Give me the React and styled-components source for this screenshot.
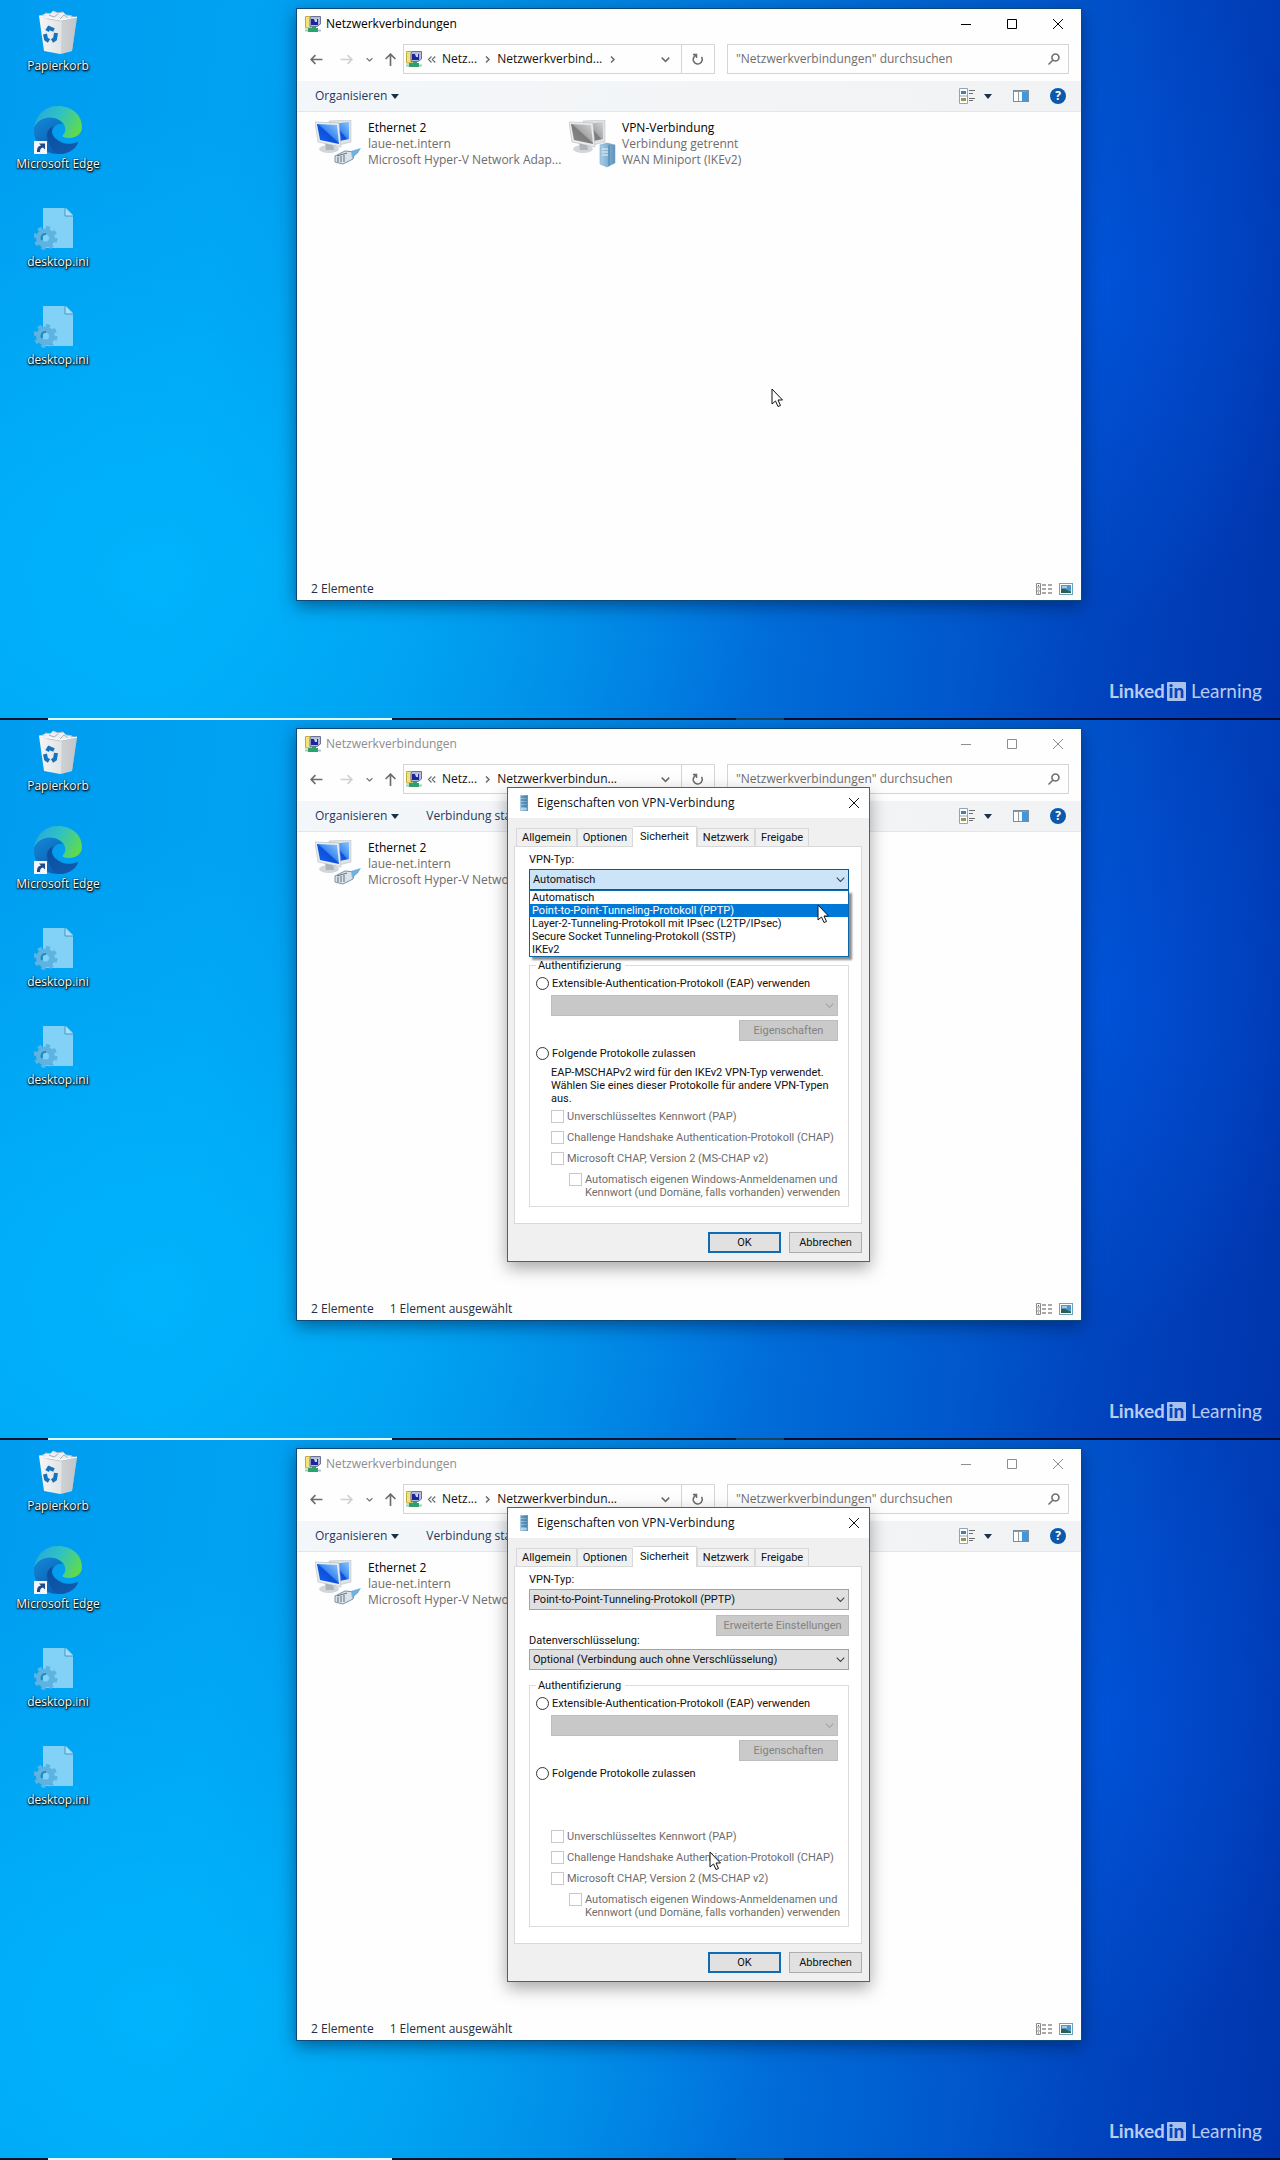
import React from "react";
import styled, { createGlobalStyle } from "styled-components";

const frames = [
  { id: "start", address: "Netzwerkverbind...", cursor: { x: 771, y: 388 } },
  {
    id: "typ",
    address: "Netzwerkverbindun...",
    selected: true,
    vpnType: "Automatisch",
    open: true,
    cursor: { x: 817, y: 184 },
  },
  {
    id: "pptp",
    address: "Netzwerkverbindun...",
    selected: true,
    vpnType: "Point-to-Point-Tunneling-Protokoll (PPTP)",
    cursor: { x: 709, y: 411 },
  },
];

const vpnTypes = [
  "Automatisch",
  "Point-to-Point-Tunneling-Protokoll (PPTP)",
  "Layer-2-Tunneling-Protokoll mit IPsec (L2TP/IPsec)",
  "Secure Socket Tunneling-Protokoll (SSTP)",
  "IKEv2",
];

const tabs = ["Allgemein", "Optionen", "Sicherheit", "Netzwerk", "Freigabe"];

/* ---------- icons ---------- */

const Gradients = () => (
  <HiddenSvg aria-hidden="true">
    <defs>
      <linearGradient id="edgeTop" x1="0" y1="0.3" x2="1" y2="0.7">
        <stop offset="0" stopColor="#27a9dc" />
        <stop offset="0.45" stopColor="#2fc2c4" />
        <stop offset="1" stopColor="#62dc45" />
      </linearGradient>
      <linearGradient id="edgeMid" x1="0" y1="0" x2="0.6" y2="1">
        <stop offset="0" stopColor="#1388d6" />
        <stop offset="1" stopColor="#0c5cb4" />
      </linearGradient>
      <linearGradient id="edgeLow" x1="0" y1="0" x2="1" y2="1">
        <stop offset="0" stopColor="#0b4f9e" />
        <stop offset="1" stopColor="#0f5cb0" />
      </linearGradient>
      <linearGradient id="bin" x1="0" y1="0" x2="1" y2="0">
        <stop offset="0" stopColor="#f4f5f6" />
        <stop offset="0.65" stopColor="#dfe2e4" />
        <stop offset="1" stopColor="#b9bfc4" />
      </linearGradient>
      <linearGradient id="screenBlue" x1="0" y1="1" x2="1" y2="0">
        <stop offset="0" stopColor="#1668ee" />
        <stop offset="0.5" stopColor="#0c50dc" />
        <stop offset="0.55" stopColor="#3f8cf0" />
        <stop offset="1" stopColor="#8cc6ff" />
      </linearGradient>
      <linearGradient id="screenGrey" x1="0" y1="1" x2="1" y2="0">
        <stop offset="0" stopColor="#8a8a8a" />
        <stop offset="0.5" stopColor="#7c7c7c" />
        <stop offset="0.55" stopColor="#a8a8a8" />
        <stop offset="1" stopColor="#d4d4d4" />
      </linearGradient>
      <linearGradient id="tower" x1="0" y1="0" x2="1" y2="0">
        <stop offset="0" stopColor="#a9cfe8" />
        <stop offset="1" stopColor="#5d93bd" />
      </linearGradient>
    </defs>
  </HiddenSvg>
);

const BinIcon = () => (
  <svg width="48" height="48" viewBox="0 0 48 48">
    <path d="M5 8 L14 5 L43 9 L38 43 L26 46 L10 43 Z" fill="url(#bin)" />
    <path d="M28 11 L43 9 L38 43 L27 46 Z" fill="#c3c8cc" opacity="0.7" />
    <path
      d="M8 8 L12 5 L16 6 L19 3 L24 5 L29 4 L32 7 L38 8 L36 11 L28 13 L15 11 Z"
      fill="#eceff0"
      stroke="#bcc3c8"
    />
    <path d="M15 7 L20 9 L24 6 M26 11 L30 7 L34 10" fill="none" stroke="#a9b0b5" />
    <path d="M5 8 L27 12 L43 9" fill="none" stroke="#fff" />
    <g fill="none" stroke="#1573bd" strokeWidth="4">
      <path d="M13 23 L15 20 L20 22" />
      <path d="M11 26 L12 31 L15 33" />
      <path d="M22 25 L21 31 L18 33" />
    </g>
  </svg>
);

const EdgeIcon = () => (
  <svg width="48" height="48" viewBox="0 0 48 48">
    <path
      d="M0 24 C0 15 7 11 15 11 C22 11 28 14 31 19 C26 16 19 19 18 27 C17 36 24 46 33 45.6 C30 47 27 48 24 48 C10 48 0 37 0 24Z"
      fill="url(#edgeMid)"
    />
    <path
      d="M19 20 C14 23 13 27 13 29 C13 40 21 48 28 48 C36 47 42 42 44 37 C44 36 43 36 42 36.5 C36 39 27 38 21 32 C18 29 17 24 19 20Z"
      fill="url(#edgeLow)"
    />
    <path
      d="M0 22 C2 8 12 0 24 0 C38 0 48 9 48 21 C48 28 42 32 35 32 C30 32 28 31 29 29 C33 25 32 18 25 14 C16 9 4 12 0 22Z"
      fill="url(#edgeTop)"
    />
    <rect x="0" y="35" width="13" height="13" fill="#f4f6f8" />
    <path
      d="M3 46 C3 42 4 40 7 39.500 L5 37.500 H11 V43.500 L9 41.500 C7 42 6 43 6 46 Z"
      fill="#20488c"
    />
  </svg>
);

const IniIcon = () => (
  <svg width="48" height="48" viewBox="0 0 48 48">
    <path d="M9 4 H32 L39 11 V44 H9 Z" fill="#82d2f8" />
    <path d="M31 4 V12 H39" fill="#a8e0fb" stroke="#4b96c0" />
    <circle cx="11.500" cy="34" r="6.500" fill="none" stroke="#5eb3e0" strokeWidth="6" />
    <circle
      cx="11.500"
      cy="34"
      r="10"
      fill="none"
      stroke="#5eb3e0"
      strokeWidth="4"
      strokeDasharray="4 3.850"
    />
    <path d="M8 36 A4 4 0 0 1 12 30" fill="none" stroke="#2b86ba" strokeWidth="2" />
  </svg>
);

const NetworkIcon = () => (
  <svg width="16" height="16" viewBox="0 0 16 16">
    <path d="M0.500 0.500 H6 V12 H0.500 Z" fill="#f2e27c" stroke="#c2ab45" />
    <path d="M6 0.500 H15.500 V8 L12 10.500 H5 V2 Z" fill="#b4bcd6" stroke="#6a7296" />
    <path d="M6 3 H13 V9 H6 Z" fill="#1c259c" />
    <path d="M9 3 H12 V6 H10 Z" fill="#c7d3f5" />
    <path d="M7 10.500 H11 V12 H13 V16 H3 V12 H7 Z" fill="#2fa06c" />
    <path d="M0 14.500 H3 M13 14.500 H16" stroke="#a5c9c0" strokeWidth="2" />
  </svg>
);

const Screens = ({ fill }) => (
  <>
    <path d="M14 1 L36 0 V22 L20 26 Z" fill="#dfe3e6" stroke="#b3b8bc" strokeWidth="0.500" />
    <path d="M17 4 L34 2 V19 L20 22 Z" fill={fill} />
    <ellipse cx="14" cy="29" rx="10" ry="4" fill="#d2d6d9" />
    <path d="M10 22 L18 24 L19 30 H11 Z" fill="#aeb4b9" />
    <path d="M0 2 L24 3 L26 27 L3 22 Z" fill="#e9ecee" stroke="#abb1b6" strokeWidth="0.500" />
    <path d="M2 4 L22 5 L24 24 L5 20 Z" fill={fill} />
  </>
);

const EthernetIcon = () => (
  <svg width="48" height="48" viewBox="0 0 48 48">
    <Screens fill="url(#screenBlue)" />
    <path d="M20 36 L30 31 L40 32 L38 39 L28 44 L20 42 Z" fill="#dbe4ea" stroke="#7f92a1" />
    <path d="M23 37 V42 M26 36 V42 M29 35 V42 M22 36 L32 33" stroke="#5d6f7e" fill="none" />
    <path d="M36 31 L46 28 L43 33 L37 38 Z" fill="#6fb0dc" />
  </svg>
);

const VpnIcon = () => (
  <svg width="48" height="48" viewBox="0 0 48 48">
    <Screens fill="url(#screenGrey)" />
    <path d="M31 25 L38 23 L46 25 V43 L38 47 L31 44 Z" fill="url(#tower)" stroke="#6f9cbd" strokeWidth="0.500" />
    <path d="M33 29 H39 M33 32 H39 M33 35 H39" stroke="#eaf5fc" />
    <path d="M40 25 V46" stroke="#4d80a8" />
  </svg>
);

const ServerIcon = () => (
  <svg width="8" height="16" viewBox="0 0 8 16">
    <rect width="8" height="16" fill="url(#tower)" />
    <path d="M1 2 H7 M1 5 H7 M1 8 H7 M1 11 H7" stroke="#2e6b98" />
    <path d="M1 14 H7" stroke="#d9edf9" />
  </svg>
);

const LineIcon = ({ d, size = 12, width = 1 }) => (
  <svg width={size} height={size} viewBox="0 0 12 12">
    <path d={d} fill="none" stroke="currentColor" strokeWidth={width} />
  </svg>
);

const Caret = () => (
  <svg width="8" height="5" viewBox="0 0 8 5">
    <path d="M0 0 H8 L4 5 Z" fill="#1d2f45" />
  </svg>
);

const ViewIcon = () => (
  <svg width="16" height="16" viewBox="0 0 16 16">
    <path d="M0.500 0.500 H8.500 V15.500 H0.500 Z M0.500 8 H8.500" fill="#fff" stroke="#8fa5b3" />
    <rect x="2" y="3" width="5" height="3" fill="#3b82b8" />
    <rect x="2" y="10" width="5" height="3" fill="#9c9055" />
    <path d="M10 2.500 H16 M10 5.500 H14 M10 10.500 H16 M10 12.500 H14" stroke="#6d6d6d" />
  </svg>
);

const PreviewIcon = () => (
  <svg width="16" height="12" viewBox="0 0 16 12">
    <rect x="0.500" y="0.500" width="15" height="11" fill="#fff" stroke="#7b8d9b" />
    <path d="M1 1.500 H15 M5.500 2 V11" stroke="#8a9aa6" />
    <rect x="9" y="2" width="6" height="9" fill="#3f97dd" />
  </svg>
);

const DetailsIcon = () => (
  <svg width="16" height="12" viewBox="0 0 16 12">
    <path d="M0.500 0.500 H4.500 V11.500 H0.500 Z M0.500 4 H4.500 M0.500 8 H4.500" fill="none" stroke="#8a8a8a" />
    <path d="M2 2.500 H3 M2 6 H3 M2 10 H3 M6 2 H10 M12 2 H16 M6 6 H10 M12 6 H16 M6 10 H10 M12 10 H16" stroke="#555" />
  </svg>
);

const LargeIcon = () => (
  <svg width="14" height="12" viewBox="0 0 14 12">
    <rect x="0.500" y="0.500" width="13" height="11" fill="#fff" stroke="#6fa3c4" />
    <rect x="2" y="2" width="10" height="8" fill="#4f93cf" />
    <path d="M2 10 V6 L6 6 L12 9 V10 Z" fill="#2d5f4a" />
    <path d="M3 4 H8" stroke="#fff" />
  </svg>
);

const CursorIcon = () => (
  <svg width="13" height="20" viewBox="0 0 13 20">
    <path
      d="M1 1 V16 L4.500 13 L7 18.500 L9.500 17.500 L7 12 H11.500 Z"
      fill="#fff"
      stroke="#111"
    />
  </svg>
);

const closePath = "M1 1 L11 11 M11 1 L1 11";
const downPath = "M1 3.500 L6 8.500 L11 3.500";
const rightPath = "M4 2 L8 6 L4 10";

/* ---------- parts ---------- */

const DesktopIcons = () => (
  <IconColumn>
    <DesktopIcon>
      <BinIcon />
      Papierkorb
    </DesktopIcon>
    <DesktopIcon>
      <EdgeIcon />
      Microsoft Edge
    </DesktopIcon>
    <DesktopIcon>
      <IniIcon />
      desktop.ini
    </DesktopIcon>
    <DesktopIcon>
      <IniIcon />
      desktop.ini
    </DesktopIcon>
  </IconColumn>
);

const ExplorerWindow = ({ frame, children }) => (
  <Explorer>
    <TitleBar $inactive={frame.selected}>
      <NetworkIcon />
      <Title>Netzwerkverbindungen</Title>
      <CaptionButton aria-label="Minimieren">
        <LineIcon d="M1 6.500 H11" />
      </CaptionButton>
      <CaptionButton aria-label="Maximieren">
        <LineIcon d="M1.500 1.500 H10.500 V10.500 H1.500 Z" />
      </CaptionButton>
      <CaptionButton aria-label="Schließen">
        <LineIcon d={closePath} />
      </CaptionButton>
    </TitleBar>
    <NavBar>
      <NavButton aria-label="Zurück">
        <LineIcon d="M11.500 6 H1 M5 2 L1 6 L5 10" width={1.5} size={13} />
      </NavButton>
      <NavButton aria-label="Vorwärts" $faded>
        <LineIcon d="M0.500 6 H11 M7 2 L11 6 L7 10" width={1.5} size={13} />
      </NavButton>
      <NavButton aria-label="Zuletzt besucht" $width={16}>
        <LineIcon d={downPath} width={2} size={7} />
      </NavButton>
      <NavButton aria-label="Nach oben" $width={26}>
        <LineIcon d="M6 12 V1 M1.500 5.500 L6 1 L10.500 5.500" width={1.5} size={13} />
      </NavButton>
      <AddressBar>
        <NetworkIcon />
        <Chevrons>
          <LineIcon d="M6 2 L2 6 L6 10 M11 2 L7 6 L11 10" width={1.5} size={9} />
        </Chevrons>
        <Crumb>Netz...</Crumb>
        <LineIcon d={rightPath} width={2} size={9} />
        <Crumb>{frame.address}</Crumb>
        {!frame.selected && <LineIcon d={rightPath} width={2} size={9} />}
        <AddressEnd>
          <NavButton aria-label="Vorherige Orte" $width={32}>
            <LineIcon d={downPath} width={2} size={9} />
          </NavButton>
          <RefreshButton aria-label="Aktualisieren">
            <LineIcon d="M9.500 4 A4.500 4.500 0 1 1 4 2.300 M1 1.500 H4.500 V5" width={1.5} />
          </RefreshButton>
        </AddressEnd>
      </AddressBar>
      <SearchBox>
        <SearchInput
          aria-label="Suchen"
          placeholder={'"Netzwerkverbindungen" durchsuchen'}
        />
        <LineIcon d="M4.500 7.500 L0.500 11.500 M7.500 1 A3.500 3.500 0 1 1 7.400 1 Z" width={1.5} />
      </SearchBox>
    </NavBar>
    <Toolbar>
      <ToolButton>
        Organisieren <Caret />
      </ToolButton>
      {frame.selected && <ToolButton>Verbindung starten</ToolButton>}
      <ToolRight>
        <ViewIcon />
        <Caret />
        <PreviewIcon />
        <HelpButton aria-label="Hilfe">?</HelpButton>
      </ToolRight>
    </Toolbar>
    <Content>
      <Connection>
        <EthernetIcon />
        <ConnectionText>
          <ConnectionName>Ethernet 2</ConnectionName>
          laue-net.intern
          <br />
          Microsoft Hyper-V Network Adap...
        </ConnectionText>
      </Connection>
      {!frame.selected && (
        <Connection>
          <VpnIcon />
          <ConnectionText>
            <ConnectionName>VPN-Verbindung</ConnectionName>
            Verbindung getrennt
            <br />
            WAN Miniport (IKEv2)
          </ConnectionText>
        </Connection>
      )}
    </Content>
    <StatusBar>
      <span>2 Elemente</span>
      {frame.selected && <span>1 Element ausgewählt</span>}
      <StatusIcons>
        <DetailsIcon />
        <LargeIcon />
      </StatusIcons>
    </StatusBar>
    {children}
  </Explorer>
);

const Dropdown = ({ id, label, value, active, disabled }) => (
  <SelectWrap>
    <Select
      id={id}
      aria-label={label}
      defaultValue={value}
      disabled={disabled}
      $active={active}
    >
      <option value={value}>{value}</option>
    </Select>
    <SelectArrow $faded={disabled}>
      <LineIcon d={downPath} size={9} width={1.5} />
    </SelectArrow>
  </SelectWrap>
);

const PropertiesDialog = ({ frame }) => (
  <Dialog>
    <DialogTitle>
      <ServerIcon />
      <Title>Eigenschaften von VPN-Verbindung</Title>
      <CaptionButton aria-label="Schließen" $width={30}>
        <LineIcon d={closePath} />
      </CaptionButton>
    </DialogTitle>
    <Tabs>
      {tabs.map((tab) => (
        <Tab key={tab} $active={tab === "Sicherheit"}>
          {tab}
        </Tab>
      ))}
    </Tabs>
    <Pane>
      <FieldLabel htmlFor={`${frame.id}-typ`}>VPN-Typ:</FieldLabel>
      <Dropdown id={`${frame.id}-typ`} value={frame.vpnType} active={frame.open} />
      {frame.open && (
        <OptionList>
          {vpnTypes.map((type, i) => (
            <OptionItem key={type} $hover={i === 1}>
              {type}
            </OptionItem>
          ))}
        </OptionList>
      )}
      <Encryption>
        {!frame.open && (
          <>
            <AdvancedButton disabled>Erweiterte Einstellungen</AdvancedButton>
            <FieldLabel htmlFor={`${frame.id}-enc`}>Datenverschlüsselung:</FieldLabel>
            <Dropdown
              id={`${frame.id}-enc`}
              value="Optional (Verbindung auch ohne Verschlüsselung)"
            />
          </>
        )}
      </Encryption>
      <Group>
        <Legend>Authentifizierung</Legend>
        <Choice>
          <Radio type="radio" name={`${frame.id}-auth`} />
          Extensible-Authentication-Protokoll (EAP) verwenden
        </Choice>
        <Indented>
          <Dropdown id={`${frame.id}-eap`} label="EAP-Typ" value="" disabled />
          <PropsButton disabled>Eigenschaften</PropsButton>
        </Indented>
        <Choice>
          <Radio type="radio" name={`${frame.id}-auth`} />
          Folgende Protokolle zulassen
        </Choice>
        <Hint>
          {frame.open && (
            <>
              EAP-MSCHAPv2 wird für den IKEv2 VPN-Typ verwendet.
              <br />
              Wählen Sie eines dieser Protokolle für andere VPN-Typen
              <br />
              aus.
            </>
          )}
        </Hint>
        <Protocols>
          <Protocol>
            <Check type="checkbox" disabled />
            Unverschlüsseltes Kennwort (PAP)
          </Protocol>
          <Protocol>
            <Check type="checkbox" disabled />
            Challenge Handshake Authentication-Protokoll (CHAP)
          </Protocol>
          <Protocol>
            <Check type="checkbox" disabled />
            Microsoft CHAP, Version 2 (MS-CHAP v2)
          </Protocol>
          <Protocol $nested>
            <Check type="checkbox" disabled />
            <span>
              Automatisch eigenen Windows-Anmeldenamen und
              <br />
              Kennwort (und Domäne, falls vorhanden) verwenden
            </span>
          </Protocol>
        </Protocols>
      </Group>
    </Pane>
    <DialogFooter>
      <DialogButton $primary>OK</DialogButton>
      <DialogButton>Abbrechen</DialogButton>
    </DialogFooter>
  </Dialog>
);

const App = () => {
  return (
    <main>
      <GlobalStyle />
      <Gradients />
      {frames.map((frame) => (
        <React.Fragment key={frame.id}>
          <Desktop>
            <DesktopIcons />
            <ExplorerWindow frame={frame}>
              {frame.selected && <PropertiesDialog frame={frame} />}
            </ExplorerWindow>
            <Brand>
              <b>Linked</b>
              <BrandBox>in</BrandBox>
              Learning
            </Brand>
            <Cursor style={{ left: frame.cursor.x, top: frame.cursor.y }}>
              <CursorIcon />
            </Cursor>
          </Desktop>
          <Strip />
        </React.Fragment>
      ))}
    </main>
  );
};

const GlobalStyle = createGlobalStyle`
  * {
    box-sizing: border-box;
  }
  body {
    margin: 0;
    font: 12px/16px "Open Sans", "Noto Sans", sans-serif;
    color: #111;
  }
  button, input, select {
    font: inherit;
    color: inherit;
    margin: 0;
    padding: 0;
    border: 0;
    border-radius: 0;
    background: none;
  }
  svg {
    display: block;
    flex: none;
  }
`;
const HiddenSvg = styled.svg`
  position: absolute;
  width: 0;
  height: 0;
`;
const Desktop = styled.section`
  position: relative;
  display: grid;
  grid-template-columns: 296px minmax(0, 1fr) 198px;
  min-height: 718px;
  padding: 8px 0 117px;
  overflow: hidden;
  background:
    radial-gradient(ellipse 220px 340px at 86% 40%, rgba(0, 90, 235, 0.5), transparent),
    radial-gradient(ellipse 620px 460px at 12% 80%, rgba(0, 186, 255, 0.75), transparent),
    linear-gradient(
      98deg,
      #009cf0 0%,
      #00a2f2 18%,
      #0096e9 34%,
      #0076de 56%,
      #0058cc 76%,
      #0044be 86%,
      #0034ac 100%
    );
`;
const Strip = styled.div`
  height: 2px;
  background: linear-gradient(
    90deg,
    #04142e 3.75%,
    #e4f6ff 3.75% 30.6%,
    #04142e 30.6% 57.5%,
    #17415f 57.5% 61.25%,
    #020a2c 61.25%
  );
`;
const IconColumn = styled.div`
  display: grid;
  grid-auto-rows: 98px;
  align-content: start;
  width: 116px;
`;
const DesktopIcon = styled.div`
  display: flex;
  flex-direction: column;
  align-items: center;
  gap: 2px;
  color: #fff;
  text-shadow: 1px 1px 2px #000, 0 1px 2px #000, 0 0 1px #000;
`;
const Explorer = styled.div`
  position: relative;
  display: flex;
  flex-direction: column;
  background: #fefefe;
  border: 1px solid #0a4a7c;
  box-shadow: 0 5px 16px rgba(0, 20, 60, 0.5);
`;
const TitleBar = styled.div`
  display: flex;
  align-items: center;
  height: 30px;
  padding-left: 8px;
  color: ${({ $inactive }) => ($inactive ? "#8d8d8d" : "#000")};
`;
const Title = styled.div`
  flex: 1;
  padding-left: 5px;
`;
const CaptionButton = styled.button`
  display: flex;
  align-items: center;
  justify-content: center;
  width: ${({ $width = 46 }) => $width}px;
  height: 30px;
`;
const NavBar = styled.div`
  display: flex;
  align-items: center;
  padding: 5px 12px 7px 4px;
`;
const NavButton = styled.button`
  display: flex;
  align-items: center;
  justify-content: center;
  width: ${({ $width = 30 }) => $width}px;
  height: 28px;
  color: ${({ $faded }) => ($faded ? "#d0d0d0" : "#6b6b6b")};
`;
const AddressBar = styled.div`
  display: flex;
  flex: 1 1 312px;
  align-items: center;
  height: 30px;
  padding-left: 2px;
  border: 1px solid #d5d5d5;
  color: #6b6b6b;
`;
const Chevrons = styled.span`
  padding: 0 1px 0 5px;
`;
const Crumb = styled.span`
  padding: 0 6px 0 5px;
  color: #111;
`;
const AddressEnd = styled.div`
  display: flex;
  margin-left: auto;
`;
const RefreshButton = styled(NavButton)`
  width: 33px;
  border-left: 1px solid #d5d5d5;
`;
const SearchBox = styled.div`
  display: flex;
  flex: 1 1 342px;
  align-items: center;
  height: 30px;
  margin-left: 12px;
  padding: 0 8px;
  border: 1px solid #d5d5d5;
  color: #6b6b6b;
`;
const SearchInput = styled.input`
  flex: 1;
  min-width: 0;
  outline: 0;

  &::placeholder {
    color: #6f6f6f;
    opacity: 1;
  }
`;
const Toolbar = styled.div`
  display: flex;
  align-items: center;
  gap: 27px;
  height: 31px;
  padding: 0 15px 0 18px;
  background: linear-gradient(90deg, #f4f7fa, #f1f2f3);
  border-bottom: 1px solid #e4e7ea;
`;
const ToolButton = styled.button`
  display: flex;
  align-items: center;
  gap: 4px;
  color: #1e395b;
`;
const ToolRight = styled.div`
  display: flex;
  align-items: center;
  gap: 21px;
  margin-left: auto;

  svg:first-child {
    margin-right: -12px;
  }
`;
const HelpButton = styled.button`
  width: 16px;
  height: 16px;
  border-radius: 50%;
  background: #0c59ac;
  color: #fff;
  font-weight: 700;
`;
const Content = styled.div`
  display: flex;
  flex: 1;
  align-items: flex-start;
  padding: 8px 18px;
`;
const Connection = styled.div`
  display: flex;
  gap: 5px;
  width: 254px;
`;
const ConnectionText = styled.div`
  color: #6d6d6d;
  white-space: nowrap;
`;
const ConnectionName = styled.div`
  color: #000;
`;
const StatusBar = styled.div`
  display: flex;
  align-items: center;
  gap: 16px;
  height: 24px;
  padding: 1px 8px 0 14px;
  color: #1e2f45;
`;
const StatusIcons = styled.div`
  display: flex;
  gap: 7px;
  margin-left: auto;
`;
const Dialog = styled.div`
  position: absolute;
  top: 58px;
  left: 210px;
  width: 363px;
  background: #f0f0f0;
  border: 1px solid #5d5d5d;
  box-shadow: 0 6px 16px rgba(0, 0, 0, 0.35);
  font: 11px/13px Roboto, "Liberation Sans", sans-serif;
`;
const DialogTitle = styled.div`
  display: flex;
  align-items: center;
  height: 30px;
  padding-left: 12px;
  background: #fff;
  font: 12px/16px "Open Sans", "Noto Sans", sans-serif;

  ${Title} {
    padding-left: 9px;
  }
`;
const Tabs = styled.div`
  display: flex;
  align-items: flex-end;
  height: 28px;
  padding-left: 8px;
`;
const Tab = styled.button`
  height: ${({ $active }) => ($active ? 21 : 18)}px;
  margin-bottom: ${({ $active }) => ($active ? -1 : 0)}px;
  padding: 0 ${({ $active }) => ($active ? "7px 2px" : "5px")};
  background: ${({ $active }) => ($active ? "#fff" : "#f0f0f0")};
  border: 1px solid #d9d9d9;
  border-bottom: 0;
  border-left-width: ${({ $active }) => ($active ? 0 : 1)}px;
  position: relative;
  z-index: 1;
`;
const Pane = styled.div`
  position: relative;
  height: 378px;
  margin: 0 7px 0 6px;
  padding: 6px 12px 0 14px;
  background: #fff;
  border: 1px solid #d9d9d9;
`;
const FieldLabel = styled.label`
  display: block;
  height: 16px;
`;
const SelectWrap = styled.div`
  position: relative;
`;
const Select = styled.select`
  display: block;
  width: 100%;
  height: 21px;
  padding: 0 20px 0 3px;
  appearance: none;
  opacity: 1;
  background: ${({ $active, disabled }) =>
    $active ? "#cce4f7" : disabled ? "#c8c8c8" : "#e0e0e0"};
  border: 1px solid ${({ $active, disabled }) =>
    $active ? "#0a5796" : disabled ? "#bfbfbf" : "#a3a3a3"};
`;
const SelectArrow = styled.span`
  position: absolute;
  top: 6px;
  right: 4px;
  color: ${({ $faded }) => ($faded ? "#a5a5a5" : "#444")};
  pointer-events: none;
`;
const OptionList = styled.ul`
  position: absolute;
  z-index: 2;
  top: 43px;
  left: 14px;
  right: 12px;
  margin: 0;
  padding: 0;
  background: #fff;
  border: 1px solid #0a66a8;
  box-shadow: 3px 3px 2px rgba(0, 0, 0, 0.45);
  list-style: none;
`;
const OptionItem = styled.li`
  padding-left: 2px;
  color: ${({ $hover }) => ($hover ? "#fff" : "#111")};
  background: ${({ $hover }) => ($hover ? "#0078d7" : "#fff")};
`;
const Encryption = styled.div`
  display: flex;
  flex-direction: column;
  height: 69px;
  padding-top: 5px;

  ${FieldLabel} {
    height: 15px;
    margin-top: -2px;
  }
`;
const GreyButton = styled.button`
  display: block;
  height: 21px;
  margin-left: auto;
  background: #cacaca;
  border: 1px solid #bdbdbd;
  color: #838383;
`;
const AdvancedButton = styled(GreyButton)`
  width: 133px;
  flex: none;
`;
const PropsButton = styled(GreyButton)`
  width: 99px;
  margin-top: 4px;
`;
const Group = styled.fieldset`
  height: 248px;
  min-width: 0;
  margin: 0;
  padding: 2px 10px 0 6px;
  border: 1px solid #dcdcdc;
`;
const Legend = styled.legend`
  padding: 0 4px 0 2px;
`;
const Choice = styled.label`
  display: flex;
  align-items: center;
  gap: 3px;
  height: 18px;
  white-space: nowrap;
`;
const Radio = styled.input`
  width: 13px;
  height: 13px;
  appearance: none;
  background: #fff;
  border: 1px solid #333;
  border-radius: 50%;
`;
const Indented = styled.div`
  padding: 3px 0 3px 15px;
`;
const Hint = styled.p`
  height: 39px;
  margin: 4px 0 0 15px;
  white-space: nowrap;
`;
const Protocols = styled.div`
  padding: 1px 0 0 15px;
  color: #6d6d6d;
`;
const Protocol = styled.label`
  display: flex;
  gap: 3px;
  height: 21px;
  padding: 4px 0 0 ${({ $nested }) => ($nested ? 18 : 0)}px;
  white-space: nowrap;
`;
const Check = styled.input`
  flex: none;
  width: 13px;
  height: 13px;
  appearance: none;
  background: #fff;
  border: 1px solid #c9c9c9;
`;
const DialogFooter = styled.div`
  display: flex;
  justify-content: flex-end;
  gap: 8px;
  padding: 8px 7px;
`;
const DialogButton = styled.button`
  width: 73px;
  height: 21px;
  background: #e1e1e1;
  border: ${({ $primary }) => ($primary ? "2px solid #0f6cb4" : "1px solid #adadad")};
`;
const Brand = styled.div`
  position: absolute;
  right: 18px;
  bottom: 17px;
  display: flex;
  align-items: center;
  color: #b9cbee;
  font: 19px/20px Lato, sans-serif;
`;
const BrandBox = styled.span`
  width: 19px;
  height: 19px;
  margin: 0 5px 0 2px;
  border-radius: 1px;
  background: #a9c2ec;
  color: #0843b8;
  font-weight: 900;
  line-height: 18px;
  text-align: center;
`;
const Cursor = styled.div`
  position: absolute;
  z-index: 5;
  pointer-events: none;
`;

export default App;
